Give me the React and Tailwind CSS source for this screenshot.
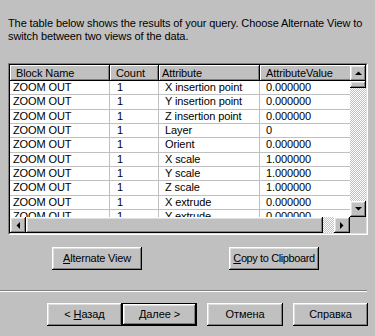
import React from "react";

const raised =
  "shadow-[inset_-1px_-1px_#000,inset_1px_1px_#fff,inset_-2px_-2px_#808080,inset_2px_2px_#dfdfdf]";
const hdr =
  "shadow-[inset_-1px_-1px_#000,inset_1px_1px_#fff,inset_-2px_-2px_#808080]";
const dither =
  "bg-[image:repeating-conic-gradient(#c0c0c0_0%_25%,#ffffff_0%_50%)] bg-[length:2px_2px]";

const rows = [
  ["X insertion point", "0.000000"],
  ["Y insertion point", "0.000000"],
  ["Z insertion point", "0.000000"],
  ["Layer", "0"],
  ["Orient", "0.000000"],
  ["X scale", "1.000000"],
  ["Y scale", "1.000000"],
  ["Z scale", "1.000000"],
  ["X extrude", "0.000000"],
  ["Y extrude", "0.000000"],
];

function Arrow({ dir }) {
  const pts = {
    up: "0,4 7,4 3.5,0.5",
    down: "0,0 7,0 3.5,3.5",
    left: "4,0 4,7 0.5,3.5",
    right: "0,0 0,7 3.5,3.5",
  }[dir];
  const vert = dir === "up" || dir === "down";
  return (
    <svg width={vert ? 7 : 4} height={vert ? 4 : 7} viewBox={vert ? "0 0 7 4" : "0 0 4 7"}>
      <polygon points={pts} fill="#000" />
    </svg>
  );
}

function SBtn({ dir }) {
  return (
    <div className={`w-[16px] h-[16px] shrink-0 bg-[#c0c0c0] flex items-center justify-center ${raised}`}>
      <Arrow dir={dir} />
    </div>
  );
}

function Btn({ children, w, def, className = "" }) {
  if (def) {
    return (
      <div className={`h-[23px] border border-black ${className}`} style={{ width: w }}>
        <div className={`w-full h-full flex items-center justify-center bg-[#c0c0c0] ${raised}`}>
          {children}
        </div>
      </div>
    );
  }
  return (
    <div
      className={`h-[23px] flex items-center justify-center bg-[#c0c0c0] ${raised} ${className}`}
      style={{ width: w }}
    >
      {children}
    </div>
  );
}

export default function App() {
  return (
    <div
      className="w-[375px] h-[336px] bg-[#c0c0c0] overflow-hidden text-[11px] text-black tracking-[-0.1px]"
      style={{ fontFamily: '"Liberation Sans", Arial, sans-serif' }}
    >
      <div className="pt-[17px] pl-[8px] leading-[13px] whitespace-nowrap">
        The table below shows the results of your query. Choose Alternate View to
        <br />
        switch between two views of the data.
      </div>

      {/* table frame */}
      <div className="mt-[20px] ml-[8px] w-[360px] h-[172px] border border-t-[#808080] border-l-[#808080] border-b-white border-r-white">
        <div className="w-full h-full border border-t-black border-l-black border-b-[#dfdfdf] border-r-[#dfdfdf] flex flex-col bg-white">
          <div className="flex h-[152px]">
            {/* content */}
            <div className="w-[340px] h-[152px] overflow-hidden">
              <div className="flex h-[16px] w-[440px] bg-[#c0c0c0]">
                <div className={`w-[100px] pl-[6px] flex items-center ${hdr}`}>Block Name</div>
                <div className={`w-[49px] pl-[6px] flex items-center ${hdr}`}>Count</div>
                <div className={`w-[101px] pl-[3px] flex items-center ${hdr}`}>Attribute</div>
                <div className={`w-[100px] pl-[6px] flex items-center ${hdr}`}>AttributeValue</div>
              </div>
              {rows.map(([a, v], i) => (
                <div key={i} className="flex h-[14.33px] w-[440px] border-b border-[#c0c0c0] leading-[13px]">
                  <div className="w-[100px] pl-[3px] border-r border-[#c0c0c0] flex items-center">ZOOM OUT</div>
                  <div className="w-[49px] pl-[7px] border-r border-[#c0c0c0] flex items-center">1</div>
                  <div className="w-[101px] pl-[6px] border-r border-[#c0c0c0] flex items-center">{a}</div>
                  <div className="w-[100px] pl-[6px] border-r border-[#c0c0c0] flex items-center">{v}</div>
                </div>
              ))}
            </div>
            {/* vertical scrollbar */}
            <div className="w-[16px] h-[152px] flex flex-col">
              <SBtn dir="up" />
              <div className={`h-[7px] bg-[#c0c0c0] ${raised}`} />
              <div className={`flex-1 ${dither}`} />
              <SBtn dir="down" />
            </div>
          </div>
          {/* horizontal scrollbar */}
          <div className="flex h-[16px]">
            <SBtn dir="left" />
            <div className={`w-[297px] h-[16px] bg-[#c0c0c0] ${raised}`} />
            <div className={`flex-1 ${dither}`} />
            <SBtn dir="right" />
            <div className="w-[16px] h-[16px] bg-[#c0c0c0]" />
          </div>
        </div>
      </div>

      {/* middle buttons */}
      <div className="flex mt-[12px] pl-[52px]">
        <Btn w={90} className="tracking-[-0.2px]">
          <span>
            <u>A</u>lternate View
          </span>
        </Btn>
        <Btn w={90} className="ml-[87px] tracking-[-0.4px]">
          <span>
            <u>C</u>opy to Clipboard
          </span>
        </Btn>
      </div>

      {/* separator */}
      <div className="mt-[20px] w-[367px] h-[2px] border-t border-t-[#808080] border-b border-b-white" />

      {/* bottom buttons */}
      <div className="flex mt-[11px] pl-[47px]">
        <Btn w={75}>
          <span>
            &lt; <u>Н</u>азад
          </span>
        </Btn>
        <Btn w={75} def>
          <span>Далее &gt;</span>
        </Btn>
        <Btn w={76} className="ml-[10px]">
          Отмена
        </Btn>
        <Btn w={75} className="ml-[10px]">
          Справка
        </Btn>
      </div>
    </div>
  );
}
